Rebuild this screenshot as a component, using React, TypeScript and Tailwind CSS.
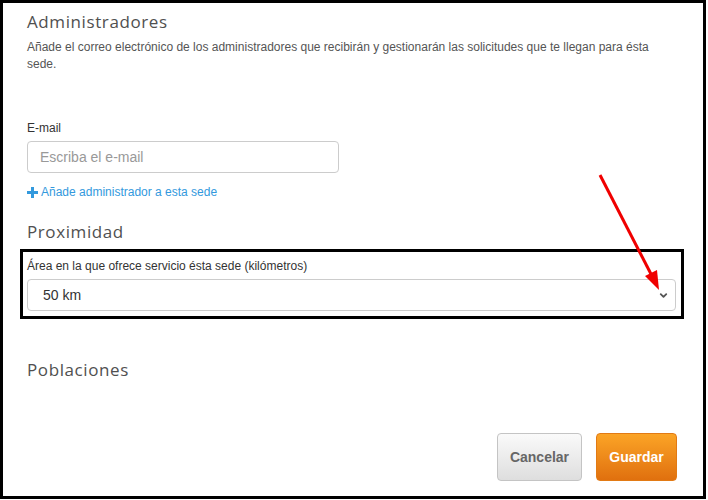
import { ChevronDown } from 'lucide-react';

export default function App() {
  return (
    <div className="relative w-[708px] h-[500px] bg-white">
      <div className="w-[706px] h-[499px] border-[3px] border-black bg-white pl-[24px] pr-[26px] pt-[8px] font-['Liberation_Sans',Arial,sans-serif]">
        {/* Administradores */}
        <h2 className="font-['Open_Sans',sans-serif] text-[17px] leading-[22px] tracking-[0.6px] text-[#505050]">
          Administradores
        </h2>
        <p className="mt-[6px] text-[12px] leading-[17px] text-[#555] w-[630px]">
          Añade el correo electrónico de los administradores que recibirán y gestionarán las solicitudes que te llegan para ésta sede.
        </p>

        <label className="block mt-[48px] text-[12px] leading-[14px] text-[#333]">E-mail</label>
        <input
          type="text"
          placeholder="Escriba el e-mail"
          className="mt-[6px] w-[312px] h-[32px] rounded-[4px] border border-[#ccc] px-[12px] text-[14px] placeholder:text-[#999] outline-none"
        />
        <div className="mt-[12px] flex items-center gap-[3px] text-[12px] leading-[14px] text-[#3399dd]">
          <svg width="11" height="11" viewBox="0 0 11 11">
            <rect x="4" y="0" width="3" height="11" fill="#3399dd" />
            <rect x="0" y="4" width="11" height="3" fill="#3399dd" />
          </svg>
          Añade administrador a esta sede
        </div>

        {/* Proximidad */}
        <h2 className="mt-[22px] font-['Open_Sans',sans-serif] text-[17px] leading-[22px] tracking-[0.6px] text-[#505050]">
          Proximidad
        </h2>
        <div className="mt-[6px] -ml-[7px] w-[664px] h-[70px] border-[3px] border-black pl-[4px] pr-[5px] pt-[7px]">
          <label className="block text-[12px] leading-[14px] text-[#333]">
            Área en la que ofrece servicio ésta sede (kilómetros)
          </label>
          <div className="mt-[6px] h-[32px] rounded-[4px] border border-[#ccc] flex items-center justify-between pl-[15px] pr-[6px] text-[14px] text-[#333]">
            <span>50 km</span>
            <ChevronDown className="w-[11px] h-[11px] text-[#555]" strokeWidth={4} />
          </div>
        </div>

        {/* Poblaciones */}
        <h2 className="mt-[40px] font-['Open_Sans',sans-serif] text-[17px] leading-[22px] tracking-[0.6px] text-[#505050]">
          Poblaciones
        </h2>

        <div className="mt-[52px] flex justify-end gap-[14px]">
          <button className="w-[85px] h-[48px] rounded-[4px] border border-[#c4c4c4] bg-gradient-to-b from-[#fafafa] to-[#dedede] text-[14px] font-bold text-[#666]">
            Cancelar
          </button>
          <button className="w-[81px] h-[48px] rounded-[4px] border border-[#e27a14] bg-gradient-to-b from-[#fba426] to-[#e0700e] text-[14px] font-bold text-white">
            Guardar
          </button>
        </div>
      </div>

      {/* red arrow annotation */}
      <svg className="absolute left-0 top-0 pointer-events-none" width="708" height="500">
        <line x1="600" y1="175" x2="652" y2="276" stroke="#f00000" strokeWidth="3" />
        <polygon points="659,290 645,276 657,270" fill="#f00000" />
      </svg>
    </div>
  );
}
